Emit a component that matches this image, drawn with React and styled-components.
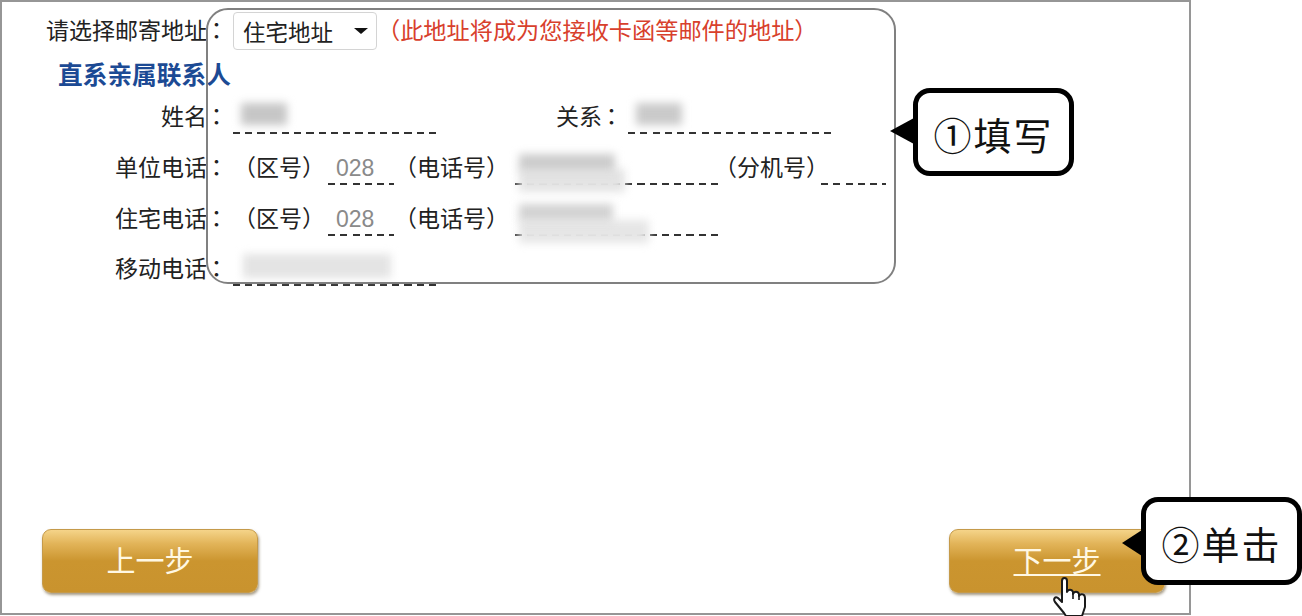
import React from 'react';
import styled, { createGlobalStyle } from 'styled-components';

const CJK = `"Noto Sans CJK SC", "Noto Sans", sans-serif`;

const GlobalStyle = createGlobalStyle`
  html, body {
    margin: 0;
    padding: 0;
    background: #fff;
  }
  body {
    font-family: ${CJK};
    color: #222;
  }
`;

const Page = styled.div`
  position: relative;
  width: 1302px;
  height: 616px;
  overflow: hidden;
  background: #fff;
`;

const Frame = styled.div`
  box-sizing: border-box;
  width: 1191px;
  height: 615px;
  border: 2px solid #969696;
  padding: 8px 24px 20px 0;
  display: flex;
  flex-direction: column;
`;

const Form = styled.div`
  flex: 1;
  display: flex;
  flex-direction: column;
`;

const Row = styled.div`
  display: flex;
  align-items: center;
  height: ${p => p.$h}px;
  font-size: 23px;
  line-height: 30px;
  white-space: nowrap;
`;

const Label = styled.div`
  box-sizing: border-box;
  width: ${p => p.$w || 231}px;
  padding-bottom: 4px;
  text-align: right;
  flex: none;
`;

const Colon = styled.span`
  font-family: "Noto Sans CJK TC", sans-serif;
  display: inline-block;
  width: 28px;
  margin-left: -2px;
  text-align: left;
`;

const SelectBox = styled.div`
  box-sizing: border-box;
  width: 144px;
  height: 38px;
  border: 1px solid #d4d4d4;
  border-radius: 4px;
  display: flex;
  align-items: center;
  justify-content: space-between;
  padding: 0 8px 0 9px;
  font-size: 22.5px;
  background: #fff;
`;

const Caret = styled.span`
  width: 0;
  height: 0;
  border-left: 7px solid transparent;
  border-right: 7px solid transparent;
  border-top: 6px solid #111;
`;

const Hint = styled.span`
  color: #d8402c;
  padding-bottom: 4px;
  font-size: 23.2px;
`;

const Heading = styled.div`
  color: #1c4a94;
  font-weight: 700;
  font-size: 24.7px;
  padding: 0 0 2px 56px;
`;

const Field = styled.div`
  position: relative;
  flex: none;
  box-sizing: border-box;
  width: ${p => p.$w}px;
  height: 34px;
  margin-left: ${p => p.$ml || 0}px;
  padding: 2px 0 0 8px;
  color: #8a8a8a;
  font-family: "Liberation Sans", sans-serif;
  font-size: 23px;
  line-height: 30px;
  background-image: repeating-linear-gradient(to right, #333 0 7px, transparent 7px 12.25px);
  background-size: 100% 2px;
  background-repeat: no-repeat;
  background-position: left bottom;
`;

const Blur = styled.div`
  position: absolute;
  left: ${p => p.$x}px;
  top: ${p => p.$y}px;
  width: ${p => p.$w}px;
  height: ${p => p.$h}px;
  background: ${p => p.$c || '#d2d2d2'};
  filter: blur(4px);
`;

const Paren = styled.span`
  margin-left: ${p => p.$ml || 0}px;
  padding-bottom: 4px;
  flex: none;
`;

const Footer = styled.div`
  display: flex;
  justify-content: space-between;
  padding-left: 40px;
`;

const GoldButton = styled.div`
  box-sizing: border-box;
  width: 216px;
  height: 64px;
  padding-bottom: 4px;
  border: 1px solid #c59a4a;
  border-radius: 9px;
  background: linear-gradient(#f5d489 0%, #e2b459 22%, #cb952f 50%, #c9932e 100%);
  box-shadow: 1px 2px 3px rgba(90, 70, 30, 0.55);
  display: flex;
  align-items: center;
  justify-content: center;
  color: #fff8e4;
  font-size: 29px;
  text-decoration: ${p => (p.$link ? 'underline' : 'none')};
  text-underline-offset: 2px;
  text-decoration-thickness: 2px;
`;

const Highlight = styled.div`
  position: absolute;
  left: 206px;
  top: 8px;
  box-sizing: border-box;
  width: 690px;
  height: 276px;
  border: 2px solid #808080;
  border-radius: 22px;
  pointer-events: none;
`;

const Callout = styled.div`
  position: absolute;
  left: ${p => p.$x}px;
  top: ${p => p.$y}px;
  box-sizing: border-box;
  width: 161px;
  height: 88px;
  padding-top: 3px;
  border: 5px solid #000;
  border-radius: 17px;
  background: #fff;
  display: flex;
  align-items: center;
  justify-content: center;
  color: #111;
  font-size: 38px;
  letter-spacing: 2px;
  line-height: 1;

  &::before {
    content: '';
    position: absolute;
    left: ${p => -4 - p.$tailW}px;
    top: ${p => p.$tail}px;
    border-top: 13px solid transparent;
    border-bottom: 13px solid transparent;
    border-right: ${p => p.$tailW}px solid #000;
  }
`;

const HandIcon = styled.svg`
  position: absolute;
  left: 1050px;
  top: 575px;
  width: 38px;
  height: 41px;
`;

const Hand = () => (
  <HandIcon viewBox="0 0 38 41">
    <path
      d="M14 38 L5 27 C3 24 5 21 8 23 L12 27 L12 6 C12 2 17 2 17 6 L17 17 C18 14 22 14 23 17 L23 19 C24 16 28 16 29 19 L29 21 C31 18 35 19 35 23 L35 32 L32 41 L16 41 Z"
      fill="#fff"
      stroke="#1a1a1a"
      strokeWidth="2"
      strokeLinejoin="round"
    />
    <path d="M23 17 L23 24 M29 19 L29 25" stroke="#1a1a1a" strokeWidth="1.6" fill="none" />
  </HandIcon>
);

export default function App() {
  return (
    <Page>
      <GlobalStyle />
      <Frame>
        <Form>
          <Row $h={42}>
            <Label>请选择邮寄地址<Colon>：</Colon></Label>
            <SelectBox>住宅地址<Caret /></SelectBox>
            <Hint>（此地址将成为您接收卡函等邮件的地址）</Hint>
          </Row>
          <Row $h={44}>
            <Heading>直系亲属联系人</Heading>
          </Row>
          <Row $h={42}>
            <Label>姓名<Colon>：</Colon></Label>
            <Field $w={204}>
              <Blur $x={8} $y={3} $w={46} $h={22} $c="#c6c6c6" />
            </Field>
            <Label $w={191}>关系<Colon>：</Colon></Label>
            <Field $w={204}>
              <Blur $x={8} $y={3} $w={46} $h={22} $c="#cacaca" />
            </Field>
          </Row>
          <Row $h={60}>
            <Label>单位电话<Colon>：</Colon></Label>
            <Paren>（区号）</Paren>
            <Field $w={66} $ml={3}>028</Field>
            <Paren>（电话号）</Paren>
            <Field $w={203} $ml={6}>
              <Blur $x={4} $y={18} $w={106} $h={23} $c="#e4e4e4" />
              <Blur $x={4} $y={3} $w={96} $h={17} $c="#cccccc" />
            </Field>
            <Paren $ml={-4}>（分机号）</Paren>
            <Field $w={65} $ml={-8} />
          </Row>
          <Row $h={42}>
            <Label>住宅电话<Colon>：</Colon></Label>
            <Paren>（区号）</Paren>
            <Field $w={66} $ml={3}>028</Field>
            <Paren>（电话号）</Paren>
            <Field $w={203} $ml={6}>
              <Blur $x={4} $y={18} $w={130} $h={23} $c="#e6e6e6" />
              <Blur $x={4} $y={2} $w={94} $h={17} $c="#d2d2d2" />
            </Field>
          </Row>
          <Row $h={58}>
            <Label>移动电话<Colon>：</Colon></Label>
            <Field $w={204}>
              <Blur $x={10} $y={2} $w={148} $h={24} $c="#e4e4e4" />
            </Field>
          </Row>
        </Form>
        <Footer>
          <GoldButton>上一步</GoldButton>
          <GoldButton $link>下一步</GoldButton>
        </Footer>
      </Frame>
      <Highlight />
      <Callout $x={913} $y={88} $tail={25} $tailW={24}>①填写</Callout>
      <Callout $x={1141} $y={497} $tail={28} $tailW={20}>②单击</Callout>
      <Hand />
    </Page>
  );
}
